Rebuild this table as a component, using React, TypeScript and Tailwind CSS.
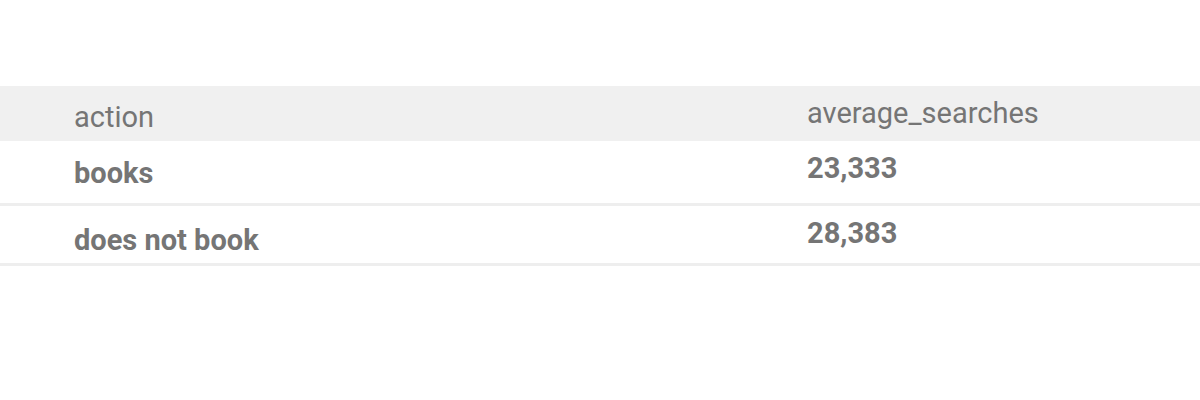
export default function App() {
  const rows = [
    { a: "books", b: "23,333", pa: "pt-[18px]", h: "h-[65px]" },
    { a: "does not book", b: "28,383", pa: "pt-[20px]", h: "h-[60px]" },
  ];
  return (
    <div className="w-[1200px] h-[400px] bg-white pt-[86px] font-['Roboto',sans-serif] text-[#757575]">
      <div className="flex h-[55px] bg-[#f0f0f0] text-[29px] leading-none">
        <div className="w-[807px] pl-[74px] pt-[17px]">action</div>
        <div className="flex-1 pt-[13px]">average_searches</div>
      </div>
      {rows.map((r) => (
        <div
          key={r.a}
          className={`flex ${r.h} border-b-[3px] border-[#eeeeee] text-[29px] font-bold leading-none`}
        >
          <div className={`w-[807px] pl-[74px] ${r.pa}`}>{r.a}</div>
          <div className="flex-1 pt-[13px]">{r.b}</div>
        </div>
      ))}
    </div>
  );
}
